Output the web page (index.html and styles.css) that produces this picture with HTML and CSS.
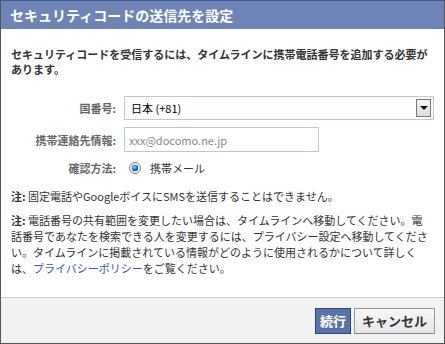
FILE: index.html
```html
<!DOCTYPE html>
<html lang="ja">
<head>
    <meta charset="UTF-8">
    <meta name="viewport" content="width=device-width, initial-scale=1.0">
    <title>セキュリティコードの送信先を設定</title>
    <link rel="stylesheet" href="styles.css">
</head>
<body>

    <!-- Dialog -->
    <div class="dialog">
        <h2 class="dialog-title">セキュリティコードの送信先を設定</h2>

        <div class="dialog-body">
            <p class="lead">セキュリティコードを受信するには、タイムラインに携帯電話番号を追加する必要があります。</p>

            <div class="form">
                <label class="form-label">国番号:</label>
                <div class="select">
                    <span class="select-value">日本 (+81)</span>
                    <span class="select-arrow"></span>
                </div>

                <label class="form-label">携帯連絡先情報:</label>
                <input class="text-input" type="text" placeholder="xxx@docomo.ne.jp">

                <label class="form-label">確認方法:</label>
                <div class="radio-row">
                    <svg class="radio" width="12" height="12" viewBox="0 0 12 12">
                        <defs>
                            <radialGradient id="dot" cx="0.4" cy="0.35" r="0.7">
                                <stop offset="0" stop-color="#9fd3ff"/>
                                <stop offset="0.5" stop-color="#2a7fd0"/>
                                <stop offset="1" stop-color="#0b3d7a"/>
                            </radialGradient>
                        </defs>
                        <circle cx="6" cy="6" r="5.5" fill="#f4f4f4" stroke="#7a7a7a"/>
                        <circle cx="6" cy="6" r="3.2" fill="url(#dot)"/>
                    </svg>
                    <span>携帯メール</span>
                </div>
            </div>

            <p class="note"><b>注:</b> 固定電話やGoogleボイスにSMSを送信することはできません。</p>
            <p class="note"><b>注:</b> 電話番号の共有範囲を変更したい場合は、タイムラインへ移動してください。電話番号であなたを検索できる人を変更するには、プライバシー設定へ移動してください。タイムラインに掲載されている情報がどのように使用されるかについて詳しくは、<a href="#">プライバシーポリシー</a>をご覧ください。</p>
        </div>

        <div class="dialog-footer">
            <button class="btn btn-primary">続行</button>
            <button class="btn btn-cancel">キャンセル</button>
        </div>
    </div>

</body>
</html>
```

FILE: styles.css
```css
/* General Styles */
body {
    margin: 0;
    font-family: "Noto Sans CJK JP", "Noto Sans", sans-serif;
    font-size: 11px;
    color: #333;
    background: #fff;
}

/* Dialog frame */
.dialog {
    width: 445px;
    height: 344px;
    box-sizing: border-box;
    display: flex;
    flex-direction: column;
    border: 1px solid #555;
    border-top-color: #3b5998;
}

.dialog-title {
    margin: 0;
    height: 28px;
    padding: 0 9px;
    background-color: #6d84b4;
    color: #fff;
    font-size: 14px;
    font-weight: bold;
    line-height: 28px;
}

/* Body */
.dialog-body {
    flex: 1;
    padding: 18px 14px 0 10px;
}

.lead {
    margin: 0 0 19px;
    font-weight: bold;
    line-height: 15px;
}

/* Form */
.form {
    display: grid;
    grid-template-columns: 105px 1fr;
    column-gap: 8px;
    row-gap: 7px;
    align-items: center;
    margin-right: -4px;
}

.form-label {
    text-align: right;
    font-weight: bold;
    color: #666;
}

.select {
    height: 24px;
    box-sizing: border-box;
    display: flex;
    align-items: center;
    justify-content: space-between;
    padding: 0 2px 0 6px;
    border: 1px solid #bdc7d8;
    color: #000;
}

.select-arrow {
    width: 15px;
    height: 18px;
    box-sizing: border-box;
    border: 1px solid #777;
    background: linear-gradient(#f6f6f6, #dcdcdc);
    position: relative;
}

.select-arrow::after {
    content: "";
    position: absolute;
    left: 3px;
    top: 6px;
    border-left: 4px solid transparent;
    border-right: 4px solid transparent;
    border-top: 4px solid #000;
}

.text-input {
    width: 195px;
    height: 25px;
    box-sizing: border-box;
    margin: 0;
    padding: 0 4px;
    border: 1px solid #bdc7d8;
    font-family: inherit;
    font-size: 11px;
    color: #333;
}

.text-input::placeholder {
    color: #888;
}

.radio-row {
    display: flex;
    align-items: center;
    gap: 9px;
    height: 18px;
    padding-left: 5px;
    color: #333;
}

/* Notes */
.note {
    margin: 11px 0 0;
    line-height: 16px;
}

.note + .note {
    margin-top: 8px;
}

.note a {
    color: #3b5998;
    text-decoration: none;
}

/* Footer */
.dialog-footer {
    height: 46px;
    box-sizing: border-box;
    display: flex;
    justify-content: flex-end;
    gap: 3px;
    padding: 10px 9px 0;
    background-color: #f2f2f2;
    border-top: 1px solid #ccc;
}

.btn {
    height: 26px;
    margin: 0;
    padding: 0 4px;
    font-family: inherit;
    font-size: 13px;
    font-weight: bold;
    line-height: 24px;
    cursor: pointer;
}

.btn-primary {
    background-color: #5b74a8;
    border: 1px solid #29447e;
    color: #fff;
}

.btn-cancel {
    padding: 0 7px;
    background: linear-gradient(#f8f8f8, #e6e6e6);
    border: 1px solid #999;
    border-bottom-color: #888;
    color: #333;
}
```
